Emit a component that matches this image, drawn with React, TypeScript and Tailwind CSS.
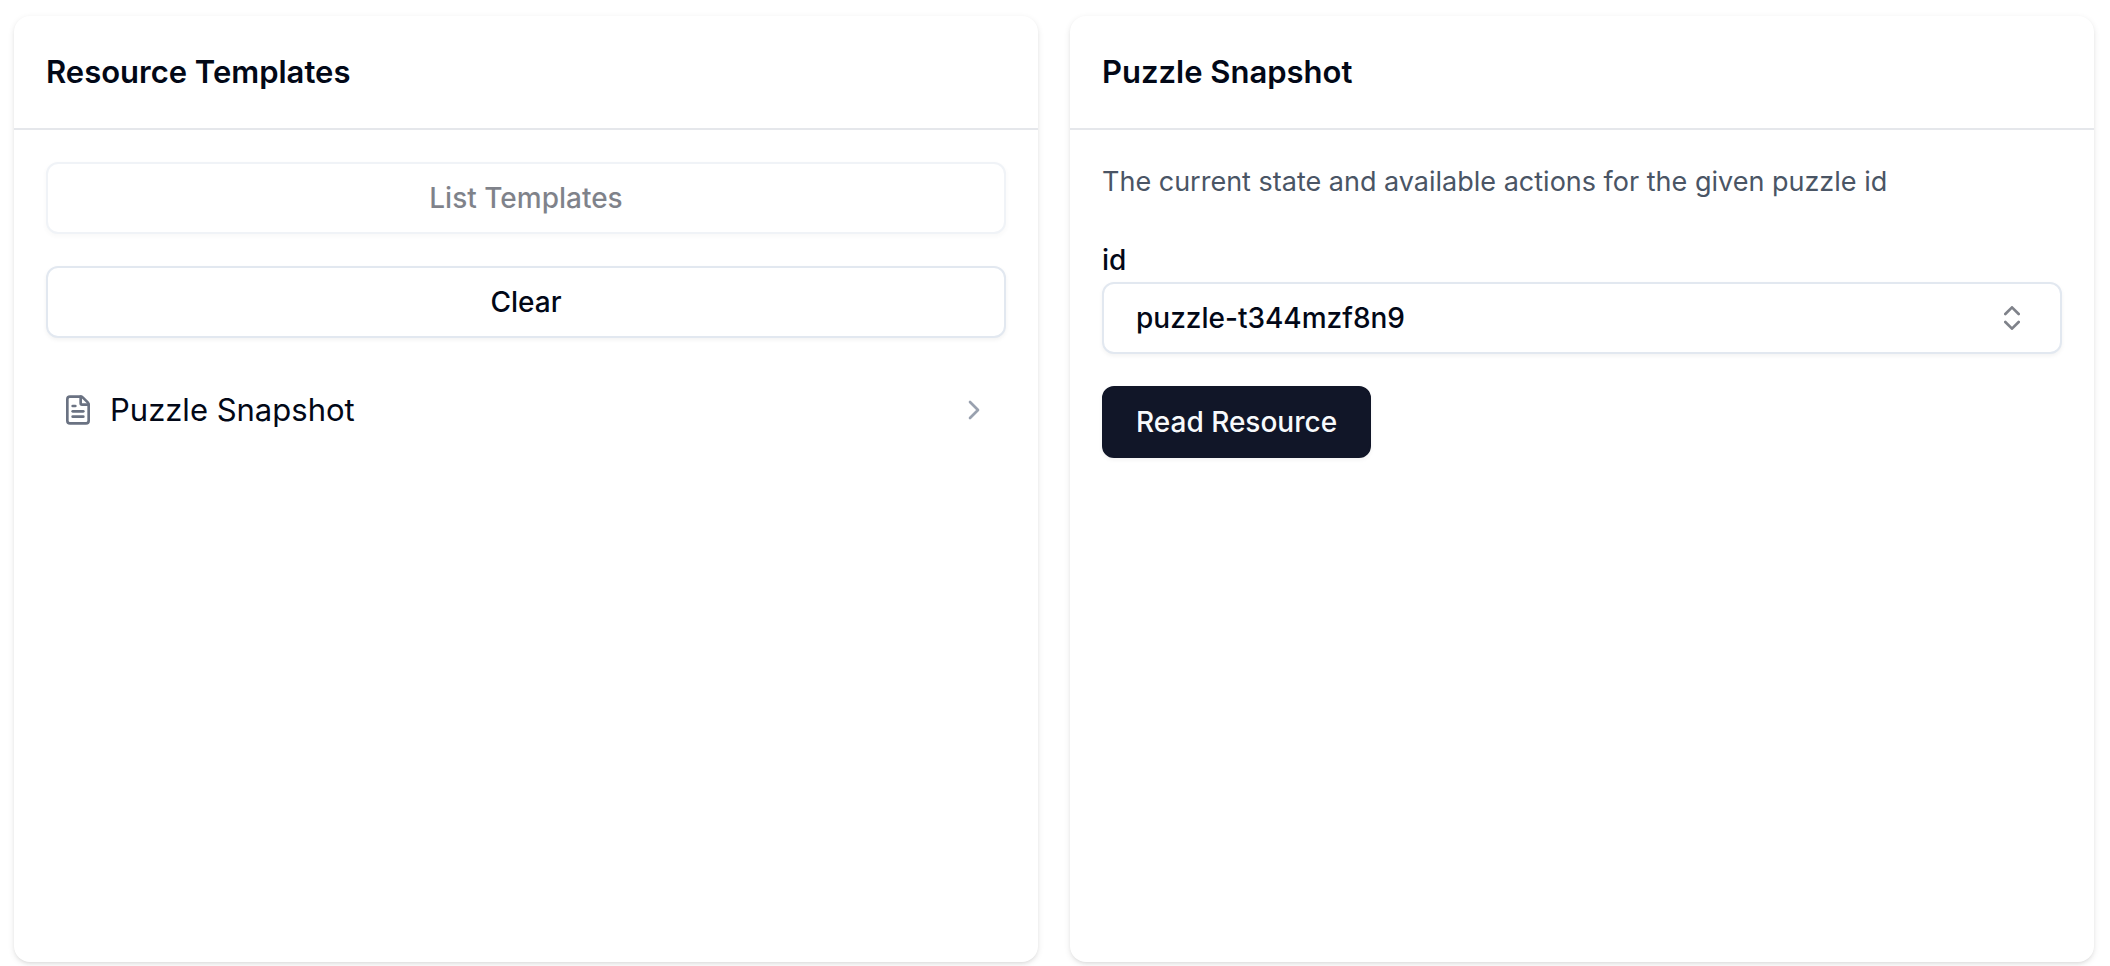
import React, { useState } from "react";
import { ChevronRight, ChevronsUpDown, FileText } from "lucide-react";
import clsx from "clsx";

const templates = [
    {
        name: "Puzzle Snapshot",
        description: "The current state and available actions for the given puzzle id",
        param: "id",
        completions: ["puzzle-t344mzf8n9"],
    },
];

type ButtonProps = React.ButtonHTMLAttributes<HTMLButtonElement> & {
    variant?: "default" | "outline";
};

function Button({ variant = "default", className, ...props }: ButtonProps) {
    return (
        <button
            type="button"
            className={clsx(
                "h-18 rounded-xl border-2 px-8 text-[28px] leading-10 font-medium shadow-[0_2px_4px_rgb(0_0_0/0.05)] disabled:opacity-50",
                variant === "outline"
                    ? "border-slate-200 bg-white text-[#020817]"
                    : "border-[#111628] bg-[#111628] text-slate-50",
                className
            )}
            {...props}
        />
    );
}

function Panel({ title, children }: { title: string; children: React.ReactNode }) {
    return (
        <section className="flex min-w-0 flex-col rounded-2xl bg-white shadow-[0_2px_6px_rgb(0_0_0/0.1),0_2px_4px_-2px_rgb(0_0_0/0.1)]">
            <header className="border-b-2 border-gray-200 p-8">
                <h3 className="text-[31px] leading-12 font-semibold">{title}</h3>
            </header>
            <div className="flex flex-col gap-8 p-8">{children}</div>
        </section>
    );
}

export default function App() {
    const [selected, setSelected] = useState(templates[0]);

    return (
        <main className="grid min-h-screen grid-cols-2 gap-8 bg-white pt-4 pr-4 pb-1 pl-3.5 font-['Inter','Liberation_Sans',sans-serif] text-[#020817]">
            <Panel title="Resource Templates">
                <Button variant="outline" disabled>
                    List Templates
                </Button>
                <Button variant="outline">Clear</Button>

                <ul className="flex flex-col">
                    {templates.map((template) => (
                        <li key={template.name}>
                            <button
                                type="button"
                                onClick={() => setSelected(template)}
                                className="flex w-full items-center gap-4 rounded-lg p-4 text-left text-[31px] leading-12 hover:bg-gray-50"
                            >
                                <FileText className="size-8 shrink-0 text-gray-500" />
                                <span className="flex-1">{template.name}</span>
                                <ChevronRight className="size-8 shrink-0 text-gray-400" />
                            </button>
                        </li>
                    ))}
                </ul>
            </Panel>

            <Panel title={selected.name}>
                <p className="text-[27px] leading-10 text-gray-600">{selected.description}</p>

                <div className="flex flex-col">
                    <label htmlFor="template-param" className="pt-1 text-[28px] leading-11 font-medium">
                        {selected.param}
                    </label>
                    <div className="grid items-center">
                        <select
                            id="template-param"
                            className="col-start-1 row-start-1 h-18 w-full appearance-none rounded-xl border-2 border-slate-200 bg-white px-8 text-[28px] leading-10 font-medium shadow-[0_2px_4px_rgb(0_0_0/0.05)]"
                        >
                            {selected.completions.map((value) => (
                                <option key={value}>{value}</option>
                            ))}
                        </select>
                        <ChevronsUpDown className="pointer-events-none col-start-1 row-start-1 mr-[34px] size-8 justify-self-end opacity-50" />
                    </div>
                </div>

                <Button className="self-start">Read Resource</Button>
            </Panel>
        </main>
    );
}
